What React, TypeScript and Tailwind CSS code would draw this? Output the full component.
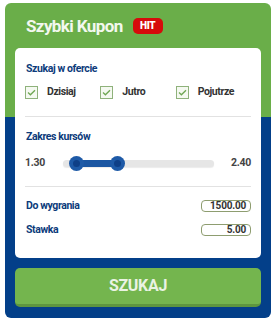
import React from "react";

function Check({ label }: { label: string }) {
  return (
    <div className="flex items-center gap-[9px]">
      <div className="w-[13px] h-[13px] border border-[#8fb27b] bg-[#f5f9f1] flex items-center justify-center">
        <svg width="9" height="7" viewBox="0 0 9 7">
          <path d="M1 3.6 L3.4 5.8 L8 1.2" fill="none" stroke="#6fa653" strokeWidth="1.3" />
        </svg>
      </div>
      <span className="text-[10.5px] font-bold text-[#333] leading-none tracking-[-0.4px]">{label}</span>
    </div>
  );
}

export default function App() {
  return (
    <div className="w-[276px] h-[324px] bg-white pt-[3px] px-[5px]" style={{ fontFamily: "Roboto, 'Liberation Sans', sans-serif" }}>
      <div className="w-[266px] h-[315px] rounded-[6px] px-[10px] bg-[linear-gradient(to_bottom,#6aae49_114px,#033f89_114px)] flex flex-col">
        <div className="h-[45px] flex items-center pl-[11px] pt-[1px] gap-[10px]">
          <span className="text-[17px] font-bold text-[#f3f8ef] tracking-[-0.6px] leading-none">Szybki Kupon</span>
          <span className="w-[30px] h-[16px] rounded-[5px] bg-[#d60b0b] text-white text-[10px] font-black tracking-[-0.3px] flex items-center justify-center leading-none">HIT</span>
        </div>
        <div className="bg-white rounded-[5px] h-[210px] px-[10px] flex flex-col">
          <div className="h-[36px] flex items-end pb-[10px] pl-[1px]">
            <span className="text-[10.5px] font-bold text-[#0c3b7b] leading-none tracking-[-0.4px]">Szukaj w ofercie</span>
          </div>
          <div className="grid grid-cols-3 h-[16px] items-center">
            <Check label="Dzisiaj" />
            <Check label="Jutro" />
            <Check label="Pojutrze" />
          </div>
          <div className="h-[17px] border-b border-[#e2e2e2]" />
          <div className="h-[29px] flex items-end pb-[4px] pl-[1px]">
            <span className="text-[10.5px] font-bold text-[#0c3b7b] leading-none tracking-[-0.4px]">Zakres kursów</span>
          </div>
          <div className="h-[34px] flex items-center justify-between">
            <span className="text-[10.5px] font-bold text-[#444] leading-none tracking-[-0.3px]">1.30</span>
            <div className="relative w-[151px] h-[7px] rounded-full bg-[#e6e6e6] shadow-[0_1px_1px_rgba(0,0,0,0.08)]">
              <div className="absolute left-[13px] w-[41px] top-0 h-[7px] bg-[#1b56a2]" />
              <div className="absolute left-[6px] top-[-4px] w-[15px] h-[15px] rounded-full bg-[#1e5aa7] flex items-center justify-center">
                <div className="w-[7px] h-[7px] rounded-full bg-[#0e3f87]" />
              </div>
              <div className="absolute left-[47px] top-[-4px] w-[15px] h-[15px] rounded-full bg-[#1e5aa7] flex items-center justify-center">
                <div className="w-[7px] h-[7px] rounded-full bg-[#0e3f87]" />
              </div>
            </div>
            <span className="text-[10.5px] font-bold text-[#444] leading-none tracking-[-0.3px]">2.40</span>
          </div>
          <div className="h-[7px] border-b border-[#e2e2e2]" />
          <div className="h-[25px] flex items-end justify-between">
            <span className="text-[10.5px] font-bold text-[#0c3b7b] leading-none tracking-[-0.4px] pl-[1px] pb-[1px]">Do wygrania</span>
            <div className="w-[50px] h-[12px] border border-[#8e9d70] rounded-[4px] flex items-center justify-end pr-[4px]">
              <span className="text-[10px] font-bold text-[#333] leading-none tracking-[-0.2px]">1500.00</span>
            </div>
          </div>
          <div className="h-[24px] flex items-end justify-between">
            <span className="text-[10.5px] font-bold text-[#0c3b7b] leading-none tracking-[-0.4px] pl-[1px] pb-[1px]">Stawka</span>
            <div className="w-[50px] h-[12px] border border-[#8e9d70] rounded-[4px] flex items-center justify-end pr-[4px]">
              <span className="text-[10px] font-bold text-[#333] leading-none tracking-[-0.2px]">5.00</span>
            </div>
          </div>
        </div>
        <div className="mt-[10px] h-[39px] rounded-[5px] bg-[#74b54e] border-b-[3px] border-[#5d963f] flex items-center justify-center">
          <span className="text-[16px] font-bold text-[#eaf3e3] leading-none tracking-[-0.3px]">SZUKAJ</span>
        </div>
      </div>
    </div>
  );
}
